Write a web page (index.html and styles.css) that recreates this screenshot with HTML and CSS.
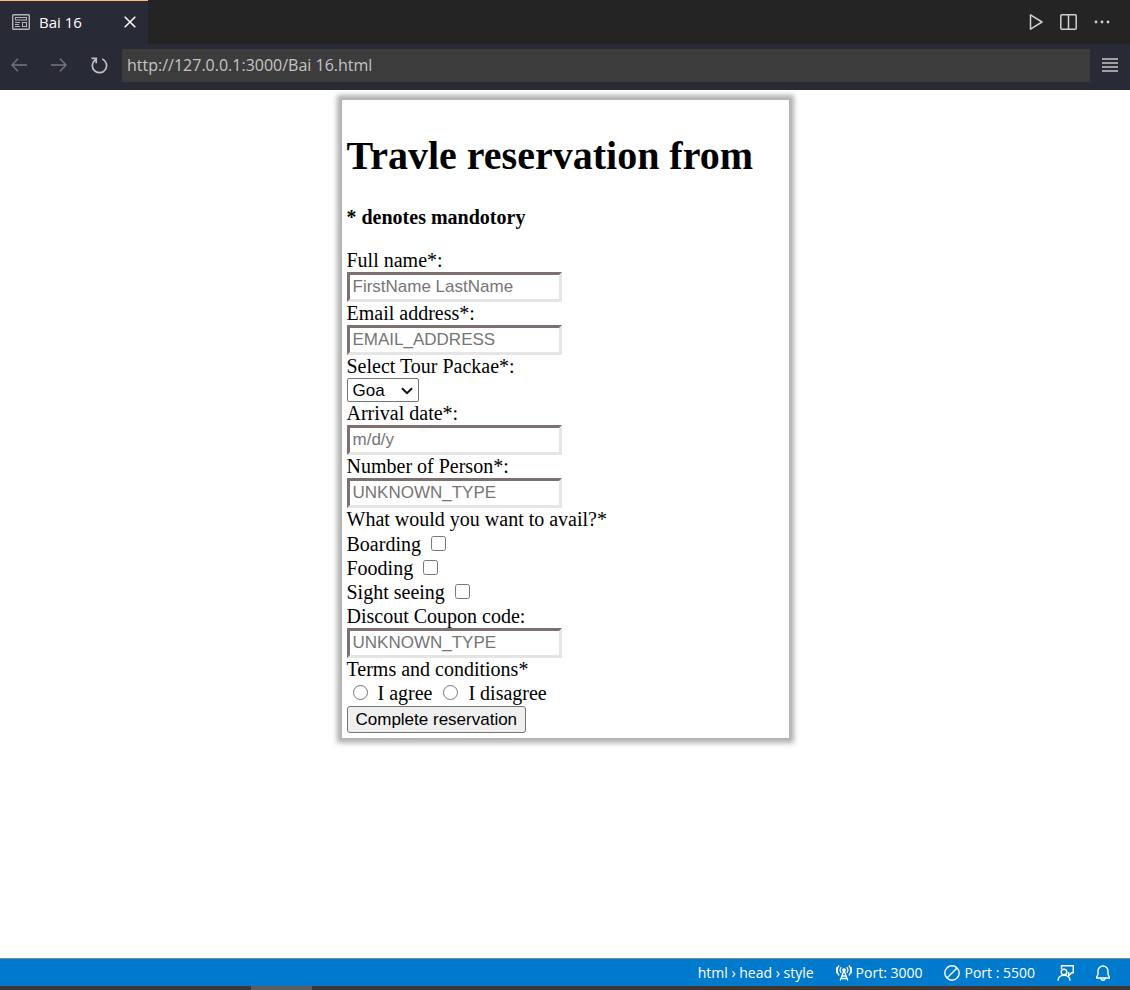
FILE: index.html
```html
<!DOCTYPE html>
<html lang="en">
<head>
<meta charset="utf-8">
<meta name="viewport" content="width=device-width, initial-scale=1">
<title>Bai 16</title>
<link rel="stylesheet" href="styles.css">
</head>
<body>
<header class="chrome">
  <div class="tabs">
    <div class="tab">
      <svg class="icon" viewBox="0 0 18 16" width="18" height="16" fill="none" stroke="#b4b4b8"><rect x=".7" y=".7" width="16.6" height="14.6" rx="1" stroke-width="1.4"/><rect x="3.5" y="3.5" width="11" height="2.5"/><path d="M3 8.5h5M3 10.5h4M3 12.5h5"/><rect x="10.5" y="8.5" width="4" height="4"/></svg>
      <span class="tab-title">Bai 16</span>
      <button class="icon-button" type="button" aria-label="Close tab"><svg viewBox="0 0 12 12" width="12" height="12" stroke="#fff" stroke-width="1.5"><path d="M.7.7l10.6 10.6M11.3.7L.7 11.3"/></svg></button>
    </div>
    <div class="tab-actions">
      <button class="icon-button" type="button" aria-label="Run"><svg viewBox="0 0 14 16" width="14" height="16" fill="none" stroke="#d0d0d0" stroke-width="1.5" stroke-linejoin="round"><path d="M1.5 .8v14.4L13 8z"/></svg></button>
      <button class="icon-button" type="button" aria-label="Split editor"><svg viewBox="0 0 17 16" width="17" height="16" fill="none" stroke="#d0d0d0" stroke-width="1.5"><rect x=".8" y=".8" width="15.4" height="14.4" rx="1"/><path d="M8.5 1v14"/></svg></button>
      <button class="icon-button" type="button" aria-label="More actions"><svg viewBox="0 0 16 4" width="16" height="4" fill="#d0d0d0"><circle cx="2" cy="2" r="1.4"/><circle cx="8" cy="2" r="1.4"/><circle cx="14" cy="2" r="1.4"/></svg></button>
    </div>
  </div>
  <div class="nav">
    <div class="nav-buttons">
      <button class="icon-button" type="button" aria-label="Back"><svg viewBox="0 0 16 14" width="16" height="14" fill="none" stroke="#77777d" stroke-width="1.3"><path d="M7 .8L1 7l6 6.2M1 7h15"/></svg></button>
      <button class="icon-button" type="button" aria-label="Forward"><svg viewBox="0 0 16 14" width="16" height="14" fill="none" stroke="#77777d" stroke-width="1.3"><path d="M9 .8L15 7l-6 6.2M15 7H0"/></svg></button>
      <button class="icon-button" type="button" aria-label="Reload"><svg viewBox="0 0 17 17" width="17" height="17" fill="none" stroke="#c0c0c3" stroke-width="1.7"><path d="M.5 1.3h4.7v4.9M4.9 2.4A7.1 7.1 0 1 0 11.2 2"/></svg></button>
    </div>
    <input class="address" type="text" aria-label="Address" value="http://127.0.0.1:3000/Bai 16.html">
    <button class="icon-button menu" type="button" aria-label="Menu"><svg viewBox="0 0 16 14" width="16" height="14" stroke="#c8c8ca" stroke-width="1.5"><path d="M0 1h16M0 5h16M0 9h16M0 13h16"/></svg></button>
  </div>
</header>

<main class="page">
  <form class="reservation">
    <h1 class="title">Travle reservation from</h1>
    <p class="note">* denotes mandotory</p>
    <label class="label" for="name">Full name*:</label>
    <input class="field" id="name" type="text" placeholder="FirstName LastName">
    <label class="label" for="email">Email address*:</label>
    <input class="field" id="email" type="email" placeholder="EMAIL_ADDRESS">
    <label class="label" for="tour">Select Tour Packae*:</label>
    <span class="select-wrap">
      <select class="select" id="tour"><option>Goa</option></select>
      <svg class="chevron" viewBox="0 0 12 8" width="12" height="8" fill="none" stroke="#111" stroke-width="2"><path d="M1 1.2l5 5 5-5"/></svg>
    </span>
    <label class="label" for="arrival">Arrival date*:</label>
    <input class="field" id="arrival" type="text" placeholder="m/d/y">
    <label class="label" for="persons">Number of Person*:</label>
    <input class="field" id="persons" type="text" placeholder="UNKNOWN_TYPE">
    <div class="label">What would you want to avail?*</div>
    <div class="choices">
      <div class="choice"><label for="boarding">Boarding</label> <input class="check" id="boarding" type="checkbox"></div>
      <div class="choice"><label for="fooding">Fooding</label> <input class="check" id="fooding" type="checkbox"></div>
      <div class="choice"><label for="sight">Sight seeing</label> <input class="check" id="sight" type="checkbox"></div>
    </div>
    <label class="label" for="coupon">Discout Coupon code:</label>
    <input class="field" id="coupon" type="text" placeholder="UNKNOWN_TYPE">
    <div class="label">Terms and conditions*</div>
    <div class="terms"><input class="radio" id="agree" name="terms" type="radio"> <label for="agree">I agree</label> <input class="radio" id="disagree" name="terms" type="radio"> <label for="disagree">I disagree</label></div>
    <button class="submit" type="button">Complete reservation</button>
  </form>
</main>

<footer class="status">
  <span class="status-path">html › head › style</span>
  <span class="status-item"><svg viewBox="0 0 16 16" width="16" height="16" fill="none" stroke="#fff" stroke-width="1.3"><path d="M8 5.5L4.2 15.5M8 5.5l3.8 10M6 11h4M5 13.5h6"/><circle cx="8" cy="5" r="1.2" fill="#fff"/><path d="M5.3 2.2a4 4 0 0 0 0 5.6M10.7 2.2a4 4 0 0 1 0 5.6M3.1.5a7.5 7.5 0 0 0 0 10M12.9.5a7.5 7.5 0 0 1 0 10M1.2 2a7 7 0 0 0 0 6.5M14.8 2a7 7 0 0 1 0 6.5"/></svg>Port: 3000</span>
  <span class="status-item"><svg viewBox="0 0 16 16" width="16" height="16" fill="none" stroke="#fff" stroke-width="1.4"><circle cx="8" cy="8" r="7.2"/><path d="M13 3L3 13"/></svg>Port : 5500</span>
  <button class="icon-button" type="button" aria-label="Feedback"><svg viewBox="0 0 17 16" width="17" height="16" fill="none" stroke="#fff" stroke-width="1.4"><path d="M4.5 4V.8h11.7v7h-1.5l-3 3V7.8h-1"/><circle cx="7" cy="7" r="2.8"/><path d="M1 15.8c0-7.5 12-7.5 12 0"/></svg></button>
  <button class="icon-button" type="button" aria-label="Notifications"><svg viewBox="0 0 14 16" width="14" height="16" fill="none" stroke="#fff" stroke-width="1.4"><path d="M.7 13v-1L2 9.5V6a5 5 0 0 1 10 0v3.5l1.3 2.5v1zM5 13.2a2 2 0 0 0 4 0"/></svg></button>
</footer>
<div class="taskbar"><span class="taskbar-item"></span></div>
</body>
</html>
```
FILE: styles.css
```css
* {
  box-sizing: border-box;
}

body {
  display: flex;
  flex-direction: column;
  min-height: 100vh;
  margin: 0;
  background: #fff;
  font-family: "Open Sans", "Noto Sans", sans-serif;
}

.chrome {
  background: #282a36;
}

.tabs {
  display: flex;
  justify-content: space-between;
  height: 44px;
  background: #242424;
}

.tab {
  display: flex;
  align-items: center;
  width: 148px;
  padding: 0 12px 2px;
  gap: 9px;
  border-top: 1px solid #ffb86c;
  background: #282a36;
  color: #fff;
  font-size: 15px;
}

.tab-title {
  flex: 1;
}

.tab-actions {
  display: flex;
  align-items: center;
  gap: 17px;
  padding-right: 20px;
}

.icon-button {
  display: flex;
  padding: 0;
  border: 0;
  background: none;
}

.nav {
  display: flex;
  align-items: center;
  height: 46px;
  padding-bottom: 4px;
}

.nav-buttons {
  display: flex;
  align-items: center;
  gap: 24px;
  width: 122px;
  padding-left: 11px;
}

.address {
  flex: 1;
  min-width: 0;
  height: 33px;
  padding: 0 5px;
  border: 0;
  background: #3c3c3c;
  color: #c5c5c5;
  font: 16px "Open Sans", "Noto Sans", sans-serif;
}

.menu {
  justify-content: center;
  width: 40px;
}

.page {
  flex: 1;
  padding: 10px;
}

.reservation {
  width: 447px;
  max-width: 100%;
  margin: 0 auto;
  padding: 5px;
  box-shadow: 0 0 5px 5px #b0b0b0;
  color: #000;
  font: 20px/23px "Liberation Serif", serif;
}

.title {
  margin: 28px 0 27px;
  font-size: 40px;
  line-height: 46px;
}

.note {
  margin: 0 0 20px;
  font-weight: bold;
}

.label {
  display: block;
}

.field {
  display: block;
  width: 215px;
  height: 30px;
  padding: 1px 3px;
  border: 3px solid;
  border-color: #7f7070 #e5e5e5 #e5e5e5 #7f7070;
  font: 17px "Liberation Sans", sans-serif;
}

.field::placeholder {
  color: #757575;
}

.select-wrap {
  display: block;
  position: relative;
  width: 72px;
}

.select {
  display: block;
  width: 100%;
  height: 24px;
  padding: 0 5px;
  border: 1px solid #767676;
  border-radius: 2px;
  appearance: none;
  background: #fff;
  font: 17px "Liberation Sans", sans-serif;
}

.chevron {
  position: absolute;
  top: 9px;
  right: 6px;
  pointer-events: none;
}

.choices {
  padding: 1px 0;
}

.choice {
  height: 24px;
  line-height: 24px;
}

.terms {
  height: 25px;
  line-height: 25px;
}

.check,
.radio {
  width: 15px;
  height: 15px;
  margin: 4px 4px 5px 5px;
}

.radio {
  margin: 4px 5px 5px 6px;
}

.submit {
  display: block;
  height: 27px;
  padding: 0 8px;
  border: 1px solid #767676;
  border-radius: 3px;
  background: #efefef;
  font: 17px "Liberation Sans", sans-serif;
}

.status {
  display: flex;
  align-items: center;
  justify-content: flex-end;
  gap: 22px;
  height: 28px;
  padding-right: 20px;
  border-top: 1px solid #808890;
  background: #007acc;
  color: #fff;
  font-size: 14px;
}

.status-item {
  display: flex;
  align-items: center;
  gap: 4px;
}

.taskbar {
  height: 4px;
  padding-left: 251px;
  background: #40362f;
}

.taskbar-item {
  display: block;
  width: 61px;
  height: 4px;
  background: #665c56;
}
```
